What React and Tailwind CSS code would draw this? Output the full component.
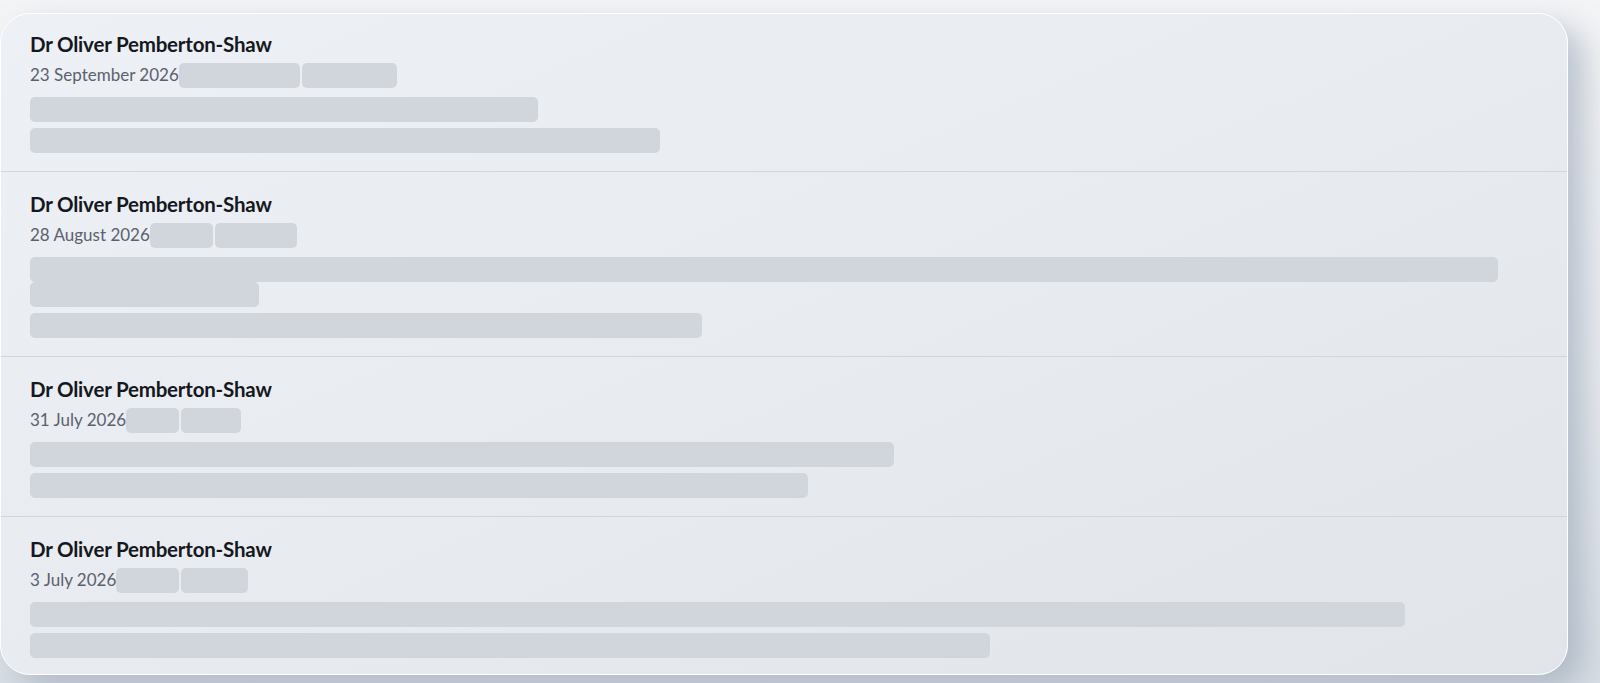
const rows = [
  { date: "23 September 2026", pills: [121, 95], bars: [[508], [630]] },
  { date: "28 August 2026", pills: [63, 82], bars: [[1468, 229], [672]] },
  { date: "31 July 2026", pills: [53, 60], bars: [[864], [778]] },
  { date: "3 July 2026", pills: [63, 67], bars: [[1375], [960]] },
];

function Skel({ w }) {
  return <span className="block h-[25px] rounded-[5px] bg-[#d1d6dd]" style={{ width: w }} />;
}

export default function App() {
  return (
    <div
      className="w-[1600px] h-[683px] overflow-hidden bg-gradient-to-b from-[#f3f4f6] via-[#e9ecf0] to-[#d9dee4] pt-[13px]"
      style={{ fontFamily: '"Lato", "Liberation Sans", sans-serif' }}
    >
      <div className="w-[1568px] rounded-[30px] bg-gradient-to-br from-[#edf0f5] via-[#e8ebf0] to-[#e1e5ea] border border-white shadow-[16px_14px_30px_rgba(150,163,180,0.6)] overflow-hidden">
        {rows.map((r, i) => (
          <div
            key={i}
            className={
              "px-[29px] " +
              (i === 3 ? "pb-[16px] " : "pb-[18px] ") +
              (i > 0 ? "pt-[18px] border-t border-[#d2d6dc]" : "pt-[16px]")
            }
          >
            <div className="text-[20.5px] leading-[28px] font-bold tracking-[-0.2px] text-[#15181d]">
              Dr Oliver Pemberton-Shaw
            </div>
            <div className="flex items-center h-[34px] text-[17px] text-[#5a616e]">
              <span>{r.date}</span>
              <div className="flex gap-[2px]">
                {r.pills.map((w, j) => (
                  <Skel key={j} w={w} />
                ))}
              </div>
            </div>
            <div className="flex flex-col gap-[6px] mt-[5px]">
              {r.bars.map((b, j) => (
                <div key={j} className="flex flex-col">
                  {b.map((w, k) => (
                    <Skel key={k} w={w} />
                  ))}
                </div>
              ))}
            </div>
          </div>
        ))}
      </div>
    </div>
  );
}
